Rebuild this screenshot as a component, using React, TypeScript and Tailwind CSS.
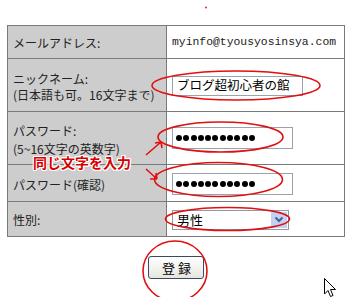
import React from "react";

const jp = { fontFamily: '"Noto Sans CJK JP", "Noto Sans", sans-serif' };

function Dots() {
  return (
    <div className="flex items-center gap-[1.3px]">
      {Array.from({ length: 11 }).map((_, i) => (
        <span key={i} className="block w-[6px] h-[6px] rounded-full bg-black" />
      ))}
    </div>
  );
}

export default function App() {
  return (
    <div className="relative w-[351px] h-[297px] bg-white overflow-hidden" style={jp}>
      <div className="ml-[7px] mt-[25px] w-[338px] border border-[#7a7a7a] text-[12px] text-[#222]">
        {/* row 1 */}
        <div className="flex h-[32px]">
          <div className="w-[159px] bg-[#cdcdcd] border-r border-[#7a7a7a] flex items-center pl-[5px] pt-[2px]">メールアドレス:</div>
          <div className="flex-1 flex items-center pl-[5px] pt-[2px] text-[11.4px] text-[#222]" style={{ fontFamily: '"Liberation Mono", monospace' }}>
            myinfo@tyousyosinsya.com
          </div>
        </div>
        {/* row 2 */}
        <div className="flex h-[53px] border-t border-[#7a7a7a]">
          <div className="w-[159px] bg-[#cdcdcd] border-r border-[#7a7a7a] flex flex-col justify-center pl-[5px] pt-[3px] leading-[16px]">
            <span>ニックネーム:</span>
            <span>(日本語も可。16文字まで)</span>
          </div>
          <div className="flex-1 flex items-center pl-[5px] pt-[1px]">
            <div className="w-[131px] h-[20px] border border-[#9aa3ad] flex items-center pl-[4px] text-[12.5px] text-black">
              ブログ超初心者の館
            </div>
          </div>
        </div>
        {/* row 3 */}
        <div className="flex h-[53px] border-t border-[#7a7a7a]">
          <div className="w-[159px] bg-[#cdcdcd] border-r border-[#7a7a7a] flex flex-col justify-center pl-[5px] pt-[3px] leading-[18px]">
            <span>パスワード:</span>
            <span>(5~16文字の英数字)</span>
          </div>
          <div className="flex-1 flex items-center pl-[5px] pb-[1px]">
            <div className="w-[121px] h-[22px] border border-[#9aa3ad] flex items-center pl-[3px]">
              <Dots />
            </div>
          </div>
        </div>
        {/* row 4 */}
        <div className="flex h-[37px] border-t border-[#7a7a7a]">
          <div className="w-[159px] bg-[#cdcdcd] border-r border-[#7a7a7a] flex items-center pl-[5px] pt-[3px]">パスワード(確認)</div>
          <div className="flex-1 flex items-center pl-[5px] pt-[1px]">
            <div className="w-[121px] h-[22px] border border-[#9aa3ad] flex items-center pl-[3px]">
              <Dots />
            </div>
          </div>
        </div>
        {/* row 5 */}
        <div className="flex h-[35px] border-t border-[#7a7a7a]">
          <div className="w-[159px] bg-[#cdcdcd] border-r border-[#7a7a7a] flex items-center pl-[5px] pt-[1px]">性別:</div>
          <div className="flex-1 flex items-center pl-[5px] pt-[1px]">
            <div className="w-[117px] h-[20px] border border-[#8e9aac] flex items-center justify-between text-[13px] text-black">
              <span className="pl-[4px]">男性</span>
              <span className="w-[16px] h-[16px] mr-[1px] bg-[#c3d1f2] flex items-center justify-center">
                <svg width="10" height="7" viewBox="0 0 10 7">
                  <path d="M1.5 1.5 L5 5 L8.5 1.5" fill="none" stroke="#4a5f8a" strokeWidth="2" />
                </svg>
              </span>
            </div>
          </div>
        </div>
      </div>

      <div className="w-[338px] ml-[7px] mt-[19px] flex justify-center">
        <button className="w-[56px] h-[23px] rounded-[3px] border border-[#3b4a60] bg-gradient-to-b from-white to-[#e6e6df] text-[13px] text-black leading-none pl-[1px]">
          登&nbsp;録
        </button>
      </div>

      {/* red annotation text */}
      <div
        className="absolute left-[33px] top-[155px] text-[14px] font-bold text-[#d80000] leading-none [text-shadow:1px_0_0_#fff,-1px_0_0_#fff,0_1px_0_#fff,0_-1px_0_#fff,1px_1px_0_#fff,-1px_-1px_0_#fff,1px_-1px_0_#fff,-1px_1px_0_#fff]"
      >
        同じ文字を入力
      </div>

      {/* annotation drawings */}
      <svg className="absolute left-0 top-0 pointer-events-none" width="351" height="297" viewBox="0 0 351 297">
        <g fill="none" stroke="#e01010" strokeWidth="1.6">
          <ellipse cx="236" cy="85.5" rx="84" ry="14.5" />
          <ellipse cx="220.5" cy="137" rx="62.5" ry="15" />
          <ellipse cx="218.5" cy="179.5" rx="64" ry="17" />
          <ellipse cx="227.5" cy="219" rx="62" ry="11.5" />
          <ellipse cx="175" cy="271" rx="32" ry="30" />
          <path d="M146 155 L161 142 M161 142 L155 143 M161 142 L162 148" />
          <path d="M146 169 L157 179 M157 179 L150 179 M157 179 L156 173" />
        </g>
        <circle cx="206" cy="7.5" r="0.9" fill="#e01010" />
        <path
          d="M324.5 278.5 L324.5 294 L328 290.5 L330.5 296.5 L333 295.5 L330.5 289.5 L335.5 289.5 Z"
          fill="#fff"
          stroke="#000"
          strokeWidth="1"
          strokeLinejoin="miter"
        />
      </svg>
    </div>
  );
}
